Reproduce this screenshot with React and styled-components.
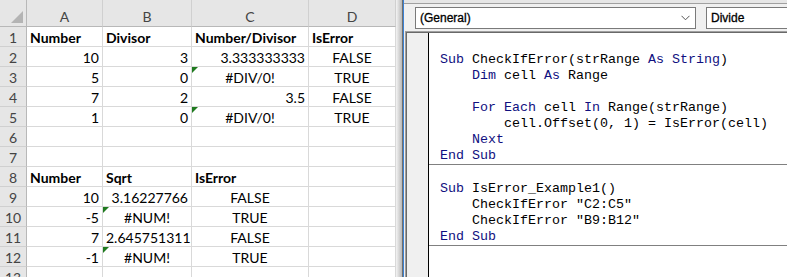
import React from "react";
import styled, { createGlobalStyle } from "styled-components";

const Global = createGlobalStyle`
  html, body {
    margin: 0;
    padding: 0;
    background: #fff;
  }
  #root {
    width: 787px;
    height: 277px;
    overflow: hidden;
  }
`;

// pagina inteira: planilha a esquerda, editor VBA a direita
const Screen = styled.div`
  display: flex;
  width: 787px;
  height: 277px;
  overflow: hidden;
`;

const Sheet = styled.div`
  flex: none;
  width: 396px;
  height: 277px;
  overflow: hidden;
  display: grid;
  grid-template-columns: 27px 76px 89px 117px 87px;
  grid-auto-rows: 20px;
  grid-template-rows: 27px;
  font-family: Lato, "Liberation Sans", sans-serif;
  font-size: 14px;
  color: #000;
`;

const Corner = styled.div`
  position: relative;
  background: #e6e6e6;
  border-right: 1px solid #b8b8b8;
  border-bottom: 1px solid #b8b8b8;
  &::after {
    content: "";
    position: absolute;
    right: 3px;
    bottom: 3px;
    border-style: solid;
    border-width: 0 0 12px 12px;
    border-color: transparent transparent #b4b4b4 transparent;
  }
`;

const ColHead = styled.div`
  background: #e6e6e6;
  border-right: 1px solid #d0d0d0;
  border-bottom: 1px solid #b8b8b8;
  color: #444;
  text-align: center;
  padding-top: 7px;
  line-height: 19px;
  box-sizing: border-box;
`;

const RowHead = styled.div`
  background: #e6e6e6;
  border-right: 1px solid #b8b8b8;
  border-bottom: 1px solid #d0d0d0;
  color: #444;
  text-align: center;
  line-height: 21px;
  box-sizing: border-box;
  white-space: nowrap;
`;

const Cell = styled.div`
  position: relative;
  border-right: 1px solid #d9d9d9;
  border-bottom: 1px solid #d9d9d9;
  box-sizing: border-box;
  padding: 0 3px;
  line-height: 21px;
  white-space: nowrap;
  text-align: ${(p) => p.$align || "left"};
  font-weight: ${(p) => (p.$bold ? 700 : 400)};
  ${(p) =>
    p.$err &&
    `&::before {
      content: "";
      position: absolute;
      left: 0;
      top: 0;
      border-style: solid;
      border-width: 6px 6px 0 0;
      border-color: #1f7a1f transparent transparent transparent;
    }`}
`;

const Shade = styled.div`
  flex: none;
  width: 6px;
  background: linear-gradient(to right, #f4f4f4, #b9b9b9);
`;

const Divider = styled.div`
  flex: none;
  width: 1px;
  background: #6e6e6e;
  border-right: 1px solid #3b82d6;
`;

const Vbe = styled.div`
  flex: 1;
  display: flex;
  flex-direction: column;
  background: #f0f0f0;
  border-top: 3px solid #e6e6e6;
  min-width: 0;
`;

const Toolbar = styled.div`
  display: flex;
  gap: 10px;
  height: 28px;
  box-sizing: border-box;
  border-top: 1px solid #a0a0a0;
  padding: 3px 0 0 11px;
`;

const Combo = styled.div`
  flex: none;
  position: relative;
  width: ${(p) => p.$width}px;
  height: 22px;
  box-sizing: border-box;
  background: #fff;
  border: 1px solid #7a7a7a;
  font-family: "Liberation Sans", Arial, sans-serif;
  font-size: 12px;
  line-height: 20px;
  padding-left: 4px;
  color: #000;
  -webkit-text-stroke: 0.3px #000;
`;

const Chevron = styled.svg`
  position: absolute;
  right: 5px;
  top: 7px;
`;

const Pane = styled.div`
  flex: 1;
  display: flex;
  margin-left: 1px;
  border-top: 1px solid #a0a0a0;
  border-left: 1px solid #a0a0a0;
  box-shadow: inset 1px 1px 0 #696969;
`;

const Gutter = styled.div`
  flex: none;
  width: 21px;
  margin-left: 1px;
  margin-top: 1px;
  border-right: 1px solid #000;
  background: #f0f0f0;
`;

const Code = styled.div`
  flex: 1;
  background: #fff;
  margin-top: 1px;
  padding-top: 3px;
  font-family: "Liberation Mono", "Courier New", monospace;
  font-size: 13.33px;
  line-height: 16px;
  color: #000;
`;

const Block = styled.div`
  border-bottom: 1px solid #808080;
`;

const Line = styled.div`
  height: 16px;
  padding-left: 11px;
  white-space: pre;
`;

const Kw = styled.span`
  color: #10107f;
`;

const cols = ["A", "B", "C", "D"];

const rows = [
  [{ t: "Number", b: 1 }, { t: "Divisor", b: 1 }, { t: "Number/Divisor", b: 1 }, { t: "IsError", b: 1 }],
  [{ t: "10", a: "right" }, { t: "3", a: "right" }, { t: "3.333333333", a: "right" }, { t: "FALSE", a: "center" }],
  [{ t: "5", a: "right" }, { t: "0", a: "right" }, { t: "#DIV/0!", a: "center", e: 1 }, { t: "TRUE", a: "center" }],
  [{ t: "7", a: "right" }, { t: "2", a: "right" }, { t: "3.5", a: "right" }, { t: "FALSE", a: "center" }],
  [{ t: "1", a: "right" }, { t: "0", a: "right" }, { t: "#DIV/0!", a: "center", e: 1 }, { t: "TRUE", a: "center" }],
  [{}, {}, {}, {}],
  [{}, {}, {}, {}],
  [{ t: "Number", b: 1 }, { t: "Sqrt", b: 1 }, { t: "IsError", b: 1 }, {}],
  [{ t: "10", a: "right" }, { t: "3.16227766", a: "right" }, { t: "FALSE", a: "center" }, {}],
  [{ t: "-5", a: "right" }, { t: "#NUM!", a: "center", e: 1 }, { t: "TRUE", a: "center" }, {}],
  [{ t: "7", a: "right" }, { t: "2.645751311", a: "right" }, { t: "FALSE", a: "center" }, {}],
  [{ t: "-1", a: "right" }, { t: "#NUM!", a: "center", e: 1 }, { t: "TRUE", a: "center" }, {}],
  [{}, {}, {}, {}],
];

export default function App() {
  return (
    <>
      <Global />
      <Screen>
        <Sheet>
          <Corner />
          {cols.map((c) => (
            <ColHead key={c}>{c}</ColHead>
          ))}
          {rows.map((r, i) => (
            <React.Fragment key={i}>
              <RowHead>{i + 1}</RowHead>
              {r.map((c, j) => (
                <Cell key={j} $align={c.a} $bold={c.b} $err={c.e}>
                  {c.t}
                </Cell>
              ))}
            </React.Fragment>
          ))}
        </Sheet>
        <Shade />
        <Divider />
        <Vbe>
          <Toolbar>
            <Combo $width={281}>
              (General)
              <Chevron width="9" height="6" viewBox="0 0 9 6">
                <path d="M0.5 0.8 L4.5 4.8 L8.5 0.8" fill="none" stroke="#555" strokeWidth="1" />
              </Chevron>
            </Combo>
            <Combo $width={120}>Divide</Combo>
          </Toolbar>
          <Pane>
            <Gutter />
            <Code>
              <Block>
                <Line> </Line>
                <Line>
                  <Kw>Sub</Kw> CheckIfError(strRange <Kw>As</Kw> <Kw>String</Kw>)
                </Line>
                <Line>
                  {"    "}
                  <Kw>Dim</Kw> cell <Kw>As</Kw> Range
                </Line>
                <Line> </Line>
                <Line>
                  {"    "}
                  <Kw>For</Kw> <Kw>Each</Kw> cell <Kw>In</Kw> Range(strRange)
                </Line>
                <Line>{"        cell.Offset(0, 1) = IsError(cell)"}</Line>
                <Line>
                  {"    "}
                  <Kw>Next</Kw>
                </Line>
                <Line>
                  <Kw>End</Kw> <Kw>Sub</Kw>
                </Line>
              </Block>
              <Block>
                <Line> </Line>
                <Line>
                  <Kw>Sub</Kw> IsError_Example1()
                </Line>
                <Line>{'    CheckIfError "C2:C5"'}</Line>
                <Line>{'    CheckIfError "B9:B12"'}</Line>
                <Line>
                  <Kw>End</Kw> <Kw>Sub</Kw>
                </Line>
              </Block>
            </Code>
          </Pane>
        </Vbe>
      </Screen>
    </>
  );
}
